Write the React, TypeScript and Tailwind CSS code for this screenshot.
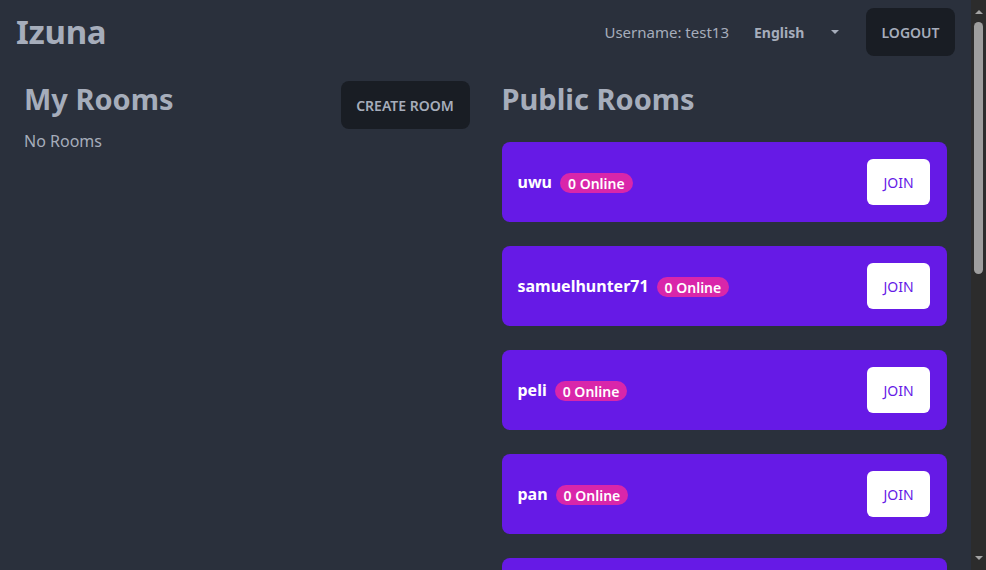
import React from "react";

const rooms = ["uwu", "samuelhunter71", "peli", "pan"];

function RoomCard({ name }: { name: string }) {
  return (
    <div className="flex h-[80px] shrink-0 items-center justify-between rounded-lg bg-[#661AE6] pl-4 pr-[17px]">
      <div className="flex items-center gap-2">
        <span className="text-[16px] font-bold text-white">{name}</span>
        <span className="mt-[2px] flex h-5 items-center rounded-full bg-[#D926AA] px-2 text-[14px] font-semibold text-white">
          0 Online
        </span>
      </div>
      <button className="flex h-[46px] w-[63px] items-center justify-center rounded-md bg-white text-[14px] text-[#661AE6]">
        JOIN
      </button>
    </div>
  );
}

function Scrollbar() {
  return (
    <div className="flex h-[570px] w-[15px] shrink-0 flex-col items-center bg-[#2c2c2c]">
      <div className="mt-[10px] h-0 w-0 border-x-[4px] border-b-[4px] border-x-transparent border-b-[#a3a3a3]" />
      <div className="mt-[8px] h-[252px] w-[9px] rounded-full bg-[#9e9e9e]" />
      <div className="flex-1" />
      <div className="mb-[10px] h-0 w-0 border-x-[4px] border-t-[4px] border-x-transparent border-t-[#a3a3a3]" />
    </div>
  );
}

export default function App() {
  return (
    <div
      className="flex h-[570px] w-[986px] overflow-hidden bg-[#2A303C] text-[#A6ADBB]"
      style={{ fontFamily: '"Noto Sans", "Open Sans", sans-serif' }}
    >
      <div className="flex min-w-0 flex-1 flex-col">
        <header className="flex h-[64px] shrink-0 items-center justify-between px-4">
          <div className="-mt-[2px] text-[33px] font-bold leading-none tracking-[-0.3px]">Izuna</div>
          <div className="flex items-center">
            <span className="text-[15px]">Username: test13</span>
            <div className="ml-[25px] flex w-[85px] items-center justify-between">
              <span className="text-[14px] font-bold">English</span>
              <span className="h-0 w-0 border-x-[4px] border-t-[4px] border-x-transparent border-t-[#A6ADBB]" />
            </div>
            <button className="ml-[27px] flex h-[48px] w-[89px] items-center justify-center rounded-lg bg-[#191D24] text-[14px] font-semibold">
              LOGOUT
            </button>
          </div>
        </header>
        <main className="grid flex-1 grid-cols-2 gap-8 px-6 pt-[17px]">
          <section className="flex flex-col">
            <div className="flex items-start justify-between">
              <h2 className="text-[29px] font-bold leading-[36px]">My Rooms</h2>
              <button className="flex h-[48px] w-[129px] items-center justify-center rounded-lg bg-[#191D24] text-[14px] font-semibold">
                CREATE ROOM
              </button>
            </div>
            <p className="mt-0 text-[16px]">No Rooms</p>
          </section>
          <section className="flex flex-col">
            <h2 className="text-[29px] font-bold leading-[36px]">Public Rooms</h2>
            <div className="mt-[25px] flex flex-col gap-6">
              {rooms.map((r) => (
                <RoomCard key={r} name={r} />
              ))}
              <div className="h-[80px] shrink-0 rounded-lg bg-[#661AE6]" />
            </div>
          </section>
        </main>
      </div>
      <Scrollbar />
    </div>
  );
}
